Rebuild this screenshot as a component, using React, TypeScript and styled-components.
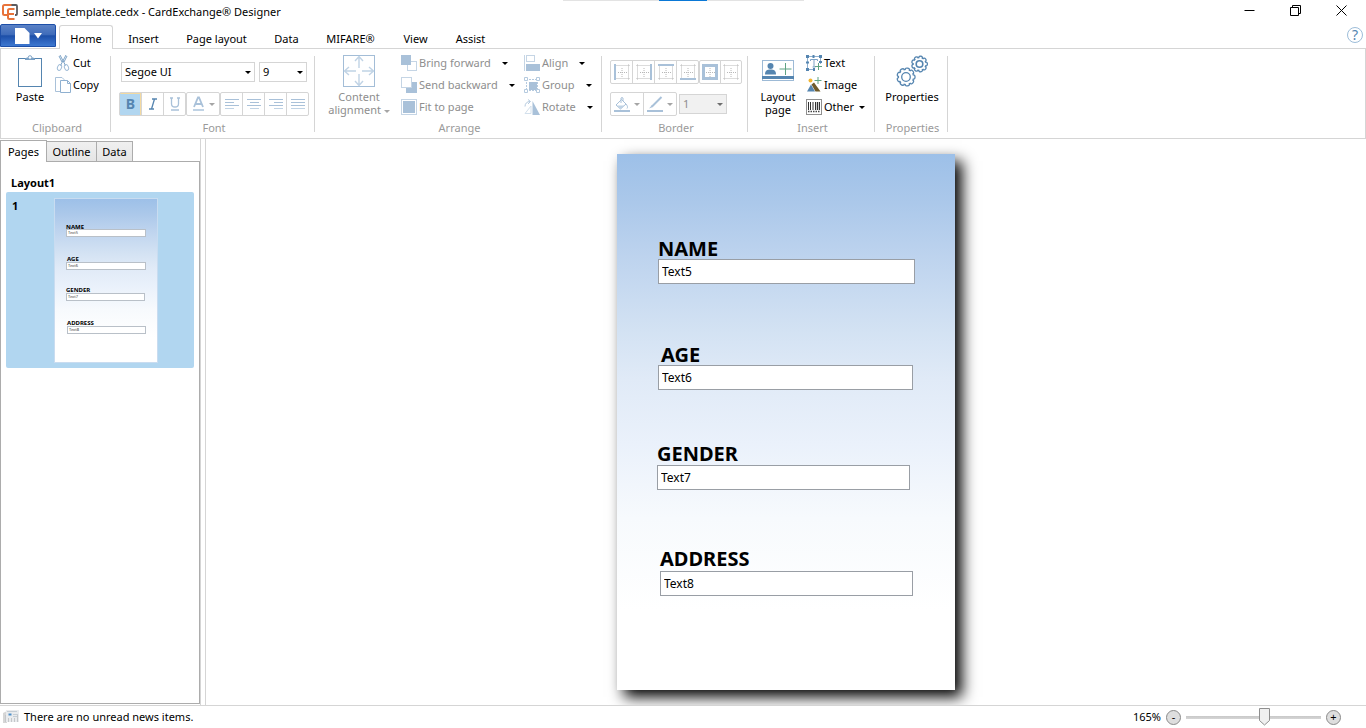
import React, { useState } from "react";
import styled, { createGlobalStyle, css } from "styled-components";

const FONT = `"Segoe UI", "Noto Sans", "Open Sans", sans-serif`;
const BLUE = "#5585b0";
const PALE = "#a9c1d9";
const LINE = "#d5d5d5";
const GREEN = "#5fa383";

const Global = createGlobalStyle`
  *, *::before, *::after { box-sizing: border-box; }
  body { margin: 0; background: #fff; }
  button, input, select { font: inherit; color: inherit; }
`;

/* ---------- frame ---------- */

const Window = styled.div`
  display: flex;
  flex-direction: column;
  height: 100vh;
  overflow: hidden;
  background: #fff;
  color: #000;
  font: 11px/16px ${FONT};
`;

const TitleBar = styled.header`
  position: relative;
  display: flex;
  align-items: center;
  height: 24px;
  padding: 0 2px;
  flex: none;
`;

const Title = styled.h1`
  flex: 1;
  margin: 0 0 0 5px;
  font-size: 11px;
  font-weight: 400;
  white-space: nowrap;
`;

const SnapHint = styled.div`
  position: absolute;
  top: 0;
  left: 50%;
  width: 241px;
  height: 1px;
  margin-left: -120px;
  background: linear-gradient(90deg, #e3e3e3 96px, #0a78d6 96px, #0a78d6 144px, #e3e3e3 144px);
`;

const PlainButton = styled.button`
  display: flex;
  align-items: center;
  justify-content: center;
  padding: 0;
  border: 0;
  background: transparent;
`;

const WindowButton = styled(PlainButton)`
  width: 46px;
  height: 20px;
  margin-bottom: 4px;
`;

/* ---------- ribbon tabs ---------- */

const TabRow = styled.nav`
  display: flex;
  align-items: stretch;
  height: 25px;
  flex: none;
  border-bottom: 1px solid ${LINE};
`;

const FileButton = styled(PlainButton)`
  width: 56px;
  height: 23px;
  gap: 4px;
  border: 1px solid #1d4fa8;
  border-radius: 2px 2px 0 0;
  background: linear-gradient(#5b82c6, #3f6cba 45%, #1c4fa8 52%, #2d63bd 75%, #3d78d0);
`;

const RibbonTab = styled.button<{ $w: number; $active?: boolean }>`
  width: ${(p) => p.$w}px;
  padding: 4px 0 0;
  border: 1px solid transparent;
  border-bottom: 0;
  background: transparent;
  text-align: center;
  white-space: nowrap;
  ${(p) =>
    p.$active &&
    css`
      margin: 1px 2px -1px 3px;
      padding-top: 2px;
      border-color: ${LINE};
      border-radius: 3px 3px 0 0;
      background: #fff;
    `}
`;

const Spacer = styled.div`
  flex: 1;
`;

const HelpButton = styled(PlainButton)`
  width: 16px;
  height: 16px;
  margin: 3px 3px 0 0;
  border: 1px solid #9dbdd9;
  border-radius: 50%;
  color: ${BLUE};
  font-size: 14px;
  line-height: 14px;
`;

/* ---------- ribbon ---------- */

const RibbonBar = styled.div`
  display: flex;
  flex: none;
  height: 90px;
  padding-top: 3px;
  border: 1px solid ${LINE};
  border-top: 0;
`;

const Group = styled.section<{ $w: number }>`
  display: flex;
  flex-direction: column;
  width: ${(p) => p.$w}px;
  flex: none;
`;

const GroupBody = styled.div<{ $pad?: string }>`
  display: flex;
  height: 68px;
  padding: ${(p) => p.$pad || "0"};
`;

const GroupLabel = styled.h2`
  margin: 0;
  padding-left: 3px;
  color: #9a9a9a;
  font-size: 11px;
  font-weight: 400;
  text-align: center;
`;

const Separator = styled.div`
  width: 1px;
  height: 76px;
  margin-top: 4px;
  flex: none;
  background: ${LINE};
`;

const BigButton = styled.button<{ $w: number }>`
  display: flex;
  flex-direction: column;
  align-items: center;
  gap: 3px;
  width: ${(p) => p.$w}px;
  padding: 3px 0 0;
  border: 0;
  flex: none;
  background: transparent;
  line-height: 13px;
  white-space: nowrap;
  &:disabled {
    color: #8e8e8e;
  }
`;

const Stack = styled.div<{ $w?: number }>`
  display: flex;
  flex-direction: column;
  align-self: flex-start;
  min-width: ${(p) => p.$w ?? 0}px;
`;

const SmallButton = styled.button`
  display: flex;
  align-items: center;
  gap: 2px;
  height: 22px;
  padding: 0;
  border: 0;
  background: transparent;
  white-space: nowrap;
  &:disabled {
    color: #8e8e8e;
  }
`;

const Arrow = styled.span<{ $gap?: number; $color?: string }>`
  display: inline-block;
  margin-left: ${(p) => p.$gap ?? 0}px;
  border: 3px solid transparent;
  border-top-color: ${(p) => p.$color || "#000"};
  border-bottom: 0;
  vertical-align: middle;
`;

const ToolRows = styled.div<{ $gap: number }>`
  display: flex;
  flex-direction: column;
  gap: ${(p) => p.$gap}px;
`;

const ToolRow = styled.div<{ $gap?: number; $indent?: number }>`
  display: flex;
  align-items: center;
  gap: ${(p) => p.$gap ?? 0}px;
  padding-left: ${(p) => p.$indent ?? 0}px;
`;

const ToolSet = styled.div`
  display: flex;
  height: 24px;
`;

/* Neighbouring tools share one border line, so each is a pixel wider than its pitch. */
const Tool = styled.button<{ $pitch?: number; $on?: boolean }>`
  display: flex;
  align-items: center;
  justify-content: center;
  gap: 4px;
  width: ${(p) => (p.$pitch ?? 22) + 1}px;
  margin-left: -1px;
  padding: 0;
  border: 1px solid ${LINE};
  background: transparent;
  color: ${PALE};
  font-size: 14px;
  &:first-child {
    margin-left: 0;
    border-radius: 2px 0 0 2px;
  }
  &:last-child {
    border-radius: 0 2px 2px 0;
  }
  &:only-child {
    border-radius: 2px;
  }
  ${(p) =>
    p.$on &&
    css`
      background: #b1d6f0;
      box-shadow: inset -1px 1px 0 #f3d9a0;
      color: ${BLUE};
      font-weight: 700;
    `}
`;

const Combo = styled.label<{ $w: number; $off?: boolean }>`
  position: relative;
  display: block;
  width: ${(p) => p.$w}px;
  height: 20px;
  select {
    width: 100%;
    height: 100%;
    padding: 0 3px;
    border: 1px solid ${LINE};
    border-radius: 0;
    outline: 0;
    appearance: none;
    background: ${(p) => (p.$off ? "#f1f1f1" : "#fff")};
    color: ${(p) => (p.$off ? "#8e8e8e" : "#000")};
    opacity: 1;
  }
  ${Arrow} {
    position: absolute;
    top: 9px;
    right: 4px;
  }
`;

/* ---------- work area ---------- */

const Work = styled.main`
  display: flex;
  flex: 1;
  min-height: 0;
`;

const Sidebar = styled.aside`
  display: flex;
  flex-direction: column;
  width: 200px;
  padding: 1px 0;
  flex: none;
`;

const SideTabs = styled.div`
  display: flex;
  align-items: flex-end;
  height: 21px;
`;

const SideTab = styled.button<{ $w: number; $active?: boolean }>`
  width: ${(p) => p.$w}px;
  height: 20px;
  padding: 0;
  border: 1px solid #acacac;
  border-bottom: 0;
  background: linear-gradient(#f0f0f0, #e5e5e5);
  & + & {
    margin-left: -1px;
  }
  ${(p) =>
    p.$active &&
    css`
      z-index: 1;
      height: 22px;
      margin-bottom: -1px;
      background: #fff;
    `}
`;

const PagePanel = styled.div`
  flex: 1;
  padding: 13px 5px;
  border: 1px solid #acacac;
`;

const LayoutName = styled.h3`
  margin: 0 0 1px 5px;
  font-size: 11px;
  font-weight: 700;
`;

const PageItem = styled.div`
  display: grid;
  grid-template-columns: 48px 104px;
  padding: 6px 0 5px;
  border-radius: 2px;
  background: #b1d6f0;
`;

const PageNumber = styled.span`
  padding-left: 6px;
  font-weight: 700;
`;

const Splitter = styled.div`
  width: 6px;
  flex: none;
  border: solid ${LINE};
  border-width: 0 1px;
`;

const Canvas = styled.section`
  display: flex;
  flex: 1;
  align-items: flex-start;
  justify-content: center;
  padding-top: 15px;
  overflow: hidden;
`;

const cardFill = css`
  background: linear-gradient(
    #9dc0e8 0%,
    #abc8ea 9%,
    #bdd3ee 19%,
    #d3e2f3 33%,
    #e0eaf7 42%,
    #eaf1fb 54%,
    #f7fafd 68%,
    #fff 85%
  );
`;

const CardSheet = styled.div`
  position: relative;
  width: 338px;
  height: 536px;
  flex: none;
  ${cardFill}
  box-shadow: 7px 7px 14px #000;
`;

const Caption = styled.label<{ $x: number; $y: number }>`
  position: absolute;
  left: ${(p) => p.$x}px;
  top: ${(p) => p.$y}px;
  font-size: 20px;
  font-weight: 700;
  line-height: 24px;
`;

const FieldBox = styled.input<{ $x: number; $y: number; $w: number }>`
  position: absolute;
  left: ${(p) => p.$x}px;
  top: ${(p) => p.$y}px;
  width: ${(p) => p.$w}px;
  height: 25px;
  padding: 0 3px;
  border: 1px solid #999ea5;
  border-radius: 0;
  outline: 0;
  background: #fff;
  font-size: 12px;
`;

const ThumbSheet = styled.div`
  position: relative;
  width: 104px;
  height: 165px;
  border: 1px solid #c9dcf0;
  ${cardFill}
`;

const ThumbCaption = styled.span<{ $x: number; $y: number }>`
  position: absolute;
  left: ${(p) => p.$x}px;
  top: ${(p) => p.$y}px;
  font-size: 6px;
  font-weight: 700;
  line-height: 8px;
`;

const ThumbField = styled.span<{ $x: number; $y: number; $w: number }>`
  position: absolute;
  left: ${(p) => p.$x}px;
  top: ${(p) => p.$y}px;
  width: ${(p) => p.$w}px;
  height: 8px;
  padding-left: 1px;
  border: 1px solid #b9c0c8;
  background: #fff;
  color: #444;
  font-size: 4px;
  line-height: 6px;
`;

/* ---------- status bar ---------- */

const StatusBar = styled.footer`
  display: flex;
  align-items: center;
  gap: 5px;
  flex: none;
  height: 23px;
  padding: 0 25px 0 3px;
  border-top: 1px solid ${LINE};
`;

const ZoomButton = styled(PlainButton)`
  width: 15px;
  height: 15px;
  border: 1px solid #8a8a8a;
  border-radius: 50%;
  background: #dedede;
`;

const SliderBox = styled.div`
  position: relative;
  width: 135px;
  height: 18px;
  input {
    width: 100%;
    height: 18px;
    margin: 0;
    appearance: none;
    background: linear-gradient(#c8c8c8, #d6d6d6) 0 8px / 100% 3px no-repeat;
  }
  input::-webkit-slider-thumb {
    appearance: none;
    width: 11px;
    height: 18px;
    background: transparent;
  }
  svg {
    position: absolute;
    top: 0;
    pointer-events: none;
  }
`;

/* ---------- icons ---------- */

const Svg = ({ w, h, children }: { w: number; h: number; children: React.ReactNode }) => (
  <svg width={w} height={h} viewBox={`0 0 ${w} ${h}`} fill="none" aria-hidden="true">
    {children}
  </svg>
);

const LogoIcon = () => (
  <Svg w={16} h={16}>
    <path d="M7 1h7a1 1 0 0 1 1 1v8a1 1 0 0 1-1 1h-1" stroke="#5b5b5f" strokeWidth="1.800" />
    <path d="M9.500 1H2.500A1.500 1.500 0 0 0 1 2.500v7A1.500 1.500 0 0 0 2.500 11H5" stroke="#e8733a" strokeWidth="2" />
    <path d="M12.500 5H7.500A1.500 1.500 0 0 0 6 6.500v7A1.500 1.500 0 0 0 7.500 15h5M6 10h6" stroke="#e8733a" strokeWidth="2" />
  </Svg>
);

const DocIcon = () => (
  <Svg w={15} h={16}>
    <path d="M0 0h9.500L14.500 5v11H0z" fill="#fff" />
  </Svg>
);

const PasteIcon = () => (
  <Svg w={24} h={32}>
    <rect x=".5" y="3.500" width="23" height="28" stroke={BLUE} />
    <path d="M7 5V3.500L9 2.500h6l2 1V5z" fill="#7ca2c6" />
    <circle cx="12" cy="2.500" r="1.800" fill="#fff" stroke="#7ca2c6" />
  </Svg>
);

const CutIcon = () => (
  <Svg w={16} h={16}>
    <path d="M5 0l5.500 10.500M11 0L5.500 10.500M4 1l3 6M12 1L9 7" stroke="#7ca2c6" />
    <ellipse cx="4.500" cy="12.500" rx="2" ry="3" stroke="#9dbad6" transform="rotate(20 4.500 12.500)" />
    <ellipse cx="11.500" cy="12.500" rx="2" ry="3" stroke="#9dbad6" transform="rotate(-20 11.500 12.500)" />
  </Svg>
);

const CopyIcon = () => (
  <Svg w={16} h={16}>
    <path d="M5 14.500H.5V.5H7L9 2.500V4" stroke={PALE} />
    <path d="M5.500 3.500h7l3 3v9h-10zM12.500 3.500v3h3" stroke="#8fb0d0" />
  </Svg>
);

const ContentAlignIcon = () => (
  <Svg w={32} h={32}>
    <rect x=".5" y=".5" width="31" height="31" stroke="#a3bdd7" />
    <path
      d="M16 2v11M16 30V19M2 16h11M30 16H19M12 6l4-4.500L20 6M12 26l4 4.500 4-4.500M6 12l-4.500 4L6 20M26 12l4.500 4-4.500 4"
      stroke="#c0d3e5"
      strokeWidth="1.400"
    />
  </Svg>
);

const ForwardIcon = () => (
  <Svg w={16} h={16}>
    <rect x="6.500" y="6.500" width="9" height="9" stroke="#c5d5e5" />
    <rect width="10" height="10" fill={PALE} />
  </Svg>
);

const BackwardIcon = () => (
  <Svg w={16} h={16}>
    <rect x="5" y="5" width="11" height="11" fill={PALE} />
    <rect x=".5" y=".5" width="10" height="10" fill="#fff" stroke="#c5d5e5" />
  </Svg>
);

const FitIcon = () => (
  <Svg w={16} h={16}>
    <rect x=".5" y=".5" width="15" height="15" stroke="#c5d5e5" />
    <rect x="2" y="2" width="12" height="12" fill={PALE} />
  </Svg>
);

const AlignIcon = () => (
  <Svg w={16} h={16}>
    <path d="M.5 0v16" stroke="#c5d5e5" />
    <rect x="2.500" y=".5" width="8" height="6" stroke="#c5d5e5" />
    <rect x="2" y="9" width="14" height="7" fill={PALE} />
  </Svg>
);

const GroupIcon = () => (
  <Svg w={16} h={16}>
    <rect x="5" y="5" width="8" height="8" fill={PALE} />
    <path d="M5 2.500h7M5 13.500h7M2.500 5v7M13.500 5v7" stroke="#b5cadf" strokeDasharray="2 1" />
    <path d="M.5.5h3v3h-3zM12.500.5h3v3h-3zM.5 12.500h3v3h-3zM12.500 12.500h3v3h-3z" fill="#fff" stroke="#b5cadf" />
  </Svg>
);

const RotateIcon = () => (
  <Svg w={16} h={16}>
    <path d="M8.500 2v14H16z" fill={PALE} />
    <path d="M7 7L1 14.500h6z" stroke="#d3e0ec" />
    <path d="M1 7.500C1 4.500 3 2.500 6 2.500M4 .5l2.500 2L4 5" stroke="#b5cadf" />
  </Svg>
);

const AlignLines = ({ kind }: { kind: "left" | "center" | "right" | "full" }) => {
  const short = { left: [0, 9], center: [3, 12], right: [5, 14], full: [0, 14] }[kind];
  return (
    <Svg w={14} h={12}>
      {[0, 1, 2, 3].map((i) => {
        const [a, b] = i % 2 ? short : [0, 14];
        return <path key={i} d={`M${a} ${i * 3 + 1.5}H${b}`} stroke={i === 3 ? "#c0d3e5" : PALE} />;
      })}
    </Svg>
  );
};

const FontColorIcon = () => (
  <Svg w={13} h={16}>
    <path d="M2 11L6 1.500h1L11 11M3.500 8h6" stroke={PALE} strokeWidth="1.800" />
    <rect x="1" y="13" width="11" height="2" fill="#c0d3e5" />
  </Svg>
);

type Side = "left" | "right" | "top" | "bottom" | "all" | "none";

const BorderIcon = ({ side }: { side: Side }) => (
  <Svg w={16} h={16}>
    <path
      d="M1.500.5v15M14.500.5v15M.5 1.500h15M.5 14.500h15M8 4v9M4 8.500h9"
      stroke="#b8b8b8"
      strokeDasharray="1 1"
    />
    {side === "left" && <path d="M1 0v16" stroke={PALE} strokeWidth="2" />}
    {side === "right" && <path d="M15 0v16" stroke={PALE} strokeWidth="2" />}
    {side === "top" && <path d="M0 1h16" stroke={PALE} strokeWidth="2" />}
    {side === "bottom" && <path d="M0 15h16" stroke={PALE} strokeWidth="2" />}
    {side === "all" && <rect x="1.500" y="1.500" width="13" height="13" stroke={PALE} strokeWidth="3" />}
  </Svg>
);

const BucketIcon = () => (
  <Svg w={16} h={16}>
    <path d="M7.500 3.500L2 9l4.500 4L12 8zM7 7V2a1.500 1.500 0 0 1 2 0v3" stroke={PALE} />
    <path d="M3 9.500h8L6.500 13z" fill="#c0d3e5" />
    <path d="M12 8c1.500 2 2 3 1 4.500" stroke={PALE} />
    <path d="M0 15h16" stroke={PALE} strokeWidth="2" />
  </Svg>
);

const PenIcon = () => (
  <Svg w={16} h={16}>
    <path d="M14.500 1L5 10.500" stroke={PALE} strokeWidth="2" />
    <path d="M5 9l-3 3.500L6 11z" fill={PALE} />
    <path d="M0 15h16" stroke={PALE} strokeWidth="2" />
  </Svg>
);

const LayoutPageIcon = () => (
  <Svg w={32} h={32}>
    <rect x=".5" y="5.500" width="31" height="20" stroke="#9dbad6" />
    <rect x="0" y="21" width="32" height="3" fill={BLUE} />
    <circle cx="8.500" cy="11" r="3" fill={BLUE} />
    <path d="M3 19.500c0-4 2-5 5.500-5s5.500 1 5.500 5z" fill={BLUE} />
    <path d="M23.500 8v12M17.500 14h12" stroke={GREEN} />
  </Svg>
);

const TextIcon = () => (
  <Svg w={16} h={16}>
    <path d="M3 1.500h10M3 14.500h5M1.500 3v10M14.500 3v6" stroke="#8fb0d0" />
    <path d="M0 0h3v3H0zM6.500 0h2v3h-2zM13 0h3v3h-3zM0 6.500h3v2H0zM0 13h3v3H0zM13 6h3v2h-3zM7 13h2v3H7z" fill={BLUE} />
    <path d="M4.500 6V4.500h7V6M8 5v7M6.500 12h3" stroke="#7ca2c6" />
    <path d="M12.500 8v7M9 11.500h7" stroke={GREEN} />
  </Svg>
);

const ImageIcon = () => (
  <Svg w={16} h={16}>
    <circle cx="4.500" cy="3.500" r="2" fill="#f2b632" />
    <path d="M1 14.500L5 7.500l4 7z" fill={BLUE} />
    <path d="M5.500 7.500L8 5.500l6.500 9H9.500z" fill="#6f5a2a" />
    <path d="M12 0v7M8.500 3.500h7" stroke={GREEN} />
  </Svg>
);

const BarcodeIcon = () => (
  <Svg w={16} h={16}>
    <rect x=".5" y=".5" width="15" height="15" stroke="#8f8f8f" />
    <path d="M2.500 3v8M4.500 3v8M7 3v8M9.500 3v8M13.500 3v8" stroke="#333" />
    <path d="M11.500 3v8" stroke="#333" strokeWidth="1.500" />
    <path d="M2 12.500h12" stroke="#444" strokeWidth="1.500" strokeDasharray="1.500 1" />
  </Svg>
);

/* Scalloped outline: each tooth is a round lobe between two points of the pitch circle. */
const gearPath = (cx: number, cy: number, r: number, teeth: number) => {
  const at = (a: number, d: number) => `${(cx + d * Math.cos(a)).toFixed(2)} ${(cy + d * Math.sin(a)).toFixed(2)}`;
  let d = "";
  for (let i = 0; i < teeth; i++) {
    const a = (i * 2 * Math.PI) / teeth;
    const s = Math.PI / teeth;
    d += `${i ? "L" : "M"}${at(a - s * 0.8, r)}C${at(a - s * 0.8, r + 2.4)} ${at(a + s * 0.8, r + 2.4)} ${at(a + s * 0.8, r)}`;
  }
  return d + "Z";
};

const GearsIcon = () => (
  <Svg w={32} h={32}>
    <path d={gearPath(10, 22, 7.6, 9)} stroke={BLUE} strokeWidth="1.300" />
    <circle cx="10" cy="22" r="4.300" stroke={BLUE} strokeWidth="1.300" />
    <path d={gearPath(23.5, 9, 6.4, 9)} stroke={BLUE} strokeWidth="1.300" />
    <circle cx="23.500" cy="9" r="3.300" stroke={BLUE} strokeWidth="1.600" />
  </Svg>
);

const NewsIcon = () => (
  <Svg w={16} h={14}>
    <path d="M0 3l4-2v12H0z" fill="#d6d6d6" />
    <rect x="3" y="0" width="13" height="12" fill="#e9ebed" />
    <path d="M4 1.500h10M10 4.500h5M10 6.500h5" stroke="#c5cdd4" />
    <rect x="5.500" y="3.500" width="3" height="2" fill="#4e8fc9" />
    <path d="M2.500 5v7M5.500 8v4M8.500 8v4M11.500 8v4M14.500 5v7" stroke="#c4c7ca" />
  </Svg>
);

/* ---------- data ---------- */

const ribbonTabs = [
  { name: "Insert", w: 57 },
  { name: "Page layout", w: 89 },
  { name: "Data", w: 51 },
  { name: "MIFARE®", w: 77 },
  { name: "View", w: 53 },
  { name: "Assist", w: 57 },
];

const fields = [
  { caption: "NAME", text: "Text5", cap: [41, 83], box: [41, 105, 257], tcap: [11, 24], tbox: [11, 30, 80] },
  { caption: "AGE", text: "Text6", cap: [44, 189], box: [41, 211, 255], tcap: [12, 56], tbox: [11, 63, 80] },
  { caption: "GENDER", text: "Text7", cap: [40, 288], box: [40, 311, 253], tcap: [11, 87], tbox: [11, 94, 79] },
  { caption: "ADDRESS", text: "Text8", cap: [43, 393], box: [43, 417, 253], tcap: [12, 120], tbox: [12, 127, 79] },
];

export default function App() {
  const [zoom, setZoom] = useState(165);
  const [min, max] = [0, 280];

  return (
    <Window>
      <Global />
      <TitleBar>
        <LogoIcon />
        <Title>sample_template.cedx - CardExchange® Designer</Title>
        <SnapHint />
        <WindowButton aria-label="Minimize">
          <Svg w={11} h={11}>
            <path d="M.5 5.500h10" stroke="#000" />
          </Svg>
        </WindowButton>
        <WindowButton aria-label="Restore">
          <Svg w={11} h={11}>
            <path d="M.5 2.500h8v8h-8zM2.500 2.500v-2h8v8h-2" stroke="#000" />
          </Svg>
        </WindowButton>
        <WindowButton aria-label="Close">
          <Svg w={11} h={11}>
            <path d="M.5.5l10 10M10.500.5l-10 10" stroke="#000" />
          </Svg>
        </WindowButton>
      </TitleBar>

      <TabRow>
        <FileButton aria-label="File">
          <DocIcon />
          <Svg w={8} h={6}>
            <path d="M0 0h8L4 5.500z" fill="#fff" />
          </Svg>
        </FileButton>
        <RibbonTab $w={54} $active>
          Home
        </RibbonTab>
        {ribbonTabs.map((t) => (
          <RibbonTab key={t.name} $w={t.w}>
            {t.name}
          </RibbonTab>
        ))}
        <Spacer />
        <HelpButton aria-label="Help">?</HelpButton>
      </TabRow>

      <RibbonBar>
        <Group $w={109}>
          <GroupBody $pad="0 0 0 4px">
            <BigButton $w={50}>
              <PasteIcon />
              Paste
            </BigButton>
            <Stack>
              <SmallButton>
                <CutIcon />
                Cut
              </SmallButton>
              <SmallButton>
                <CopyIcon />
                Copy
              </SmallButton>
            </Stack>
          </GroupBody>
          <GroupLabel>Clipboard</GroupLabel>
        </Group>
        <Separator />

        <Group $w={203}>
          <GroupBody $pad="10px 0 0 8px">
            <ToolRows $gap={10}>
              <ToolRow $gap={4} $indent={2}>
                <Combo $w={134}>
                  <select aria-label="Font">
                    <option>Segoe UI</option>
                  </select>
                  <Arrow />
                </Combo>
                <Combo $w={48}>
                  <select aria-label="Font size">
                    <option>9</option>
                  </select>
                  <Arrow />
                </Combo>
              </ToolRow>
              <ToolRow>
                <ToolSet>
                  <Tool $on aria-label="Bold">
                    B
                  </Tool>
                  <Tool aria-label="Italic">
                    <Svg w={8} h={12}>
                      <path d="M3 1h5M0 11h5M5.500 1l-3 10" stroke={BLUE} strokeWidth="1.300" />
                    </Svg>
                  </Tool>
                  <Tool aria-label="Underline">
                    <Svg w={10} h={14}>
                      <path d="M1.500 1v6c0 4 7 4 7 0V1M0 1h3M7 1h3M1 13h8" stroke={PALE} strokeWidth="1.300" />
                    </Svg>
                  </Tool>
                </ToolSet>
                <ToolSet>
                  <Tool $pitch={33} aria-label="Font colour">
                    <FontColorIcon />
                    <Arrow $color="#a5a5a5" />
                  </Tool>
                </ToolSet>
                <ToolSet>
                  <Tool aria-label="Align left">
                    <AlignLines kind="left" />
                  </Tool>
                  <Tool aria-label="Align centre">
                    <AlignLines kind="center" />
                  </Tool>
                  <Tool aria-label="Align right">
                    <AlignLines kind="right" />
                  </Tool>
                  <Tool aria-label="Justify">
                    <AlignLines kind="full" />
                  </Tool>
                </ToolSet>
              </ToolRow>
            </ToolRows>
          </GroupBody>
          <GroupLabel>Font</GroupLabel>
        </Group>
        <Separator />

        <Group $w={286}>
          <GroupBody $pad="0 0 0 8px">
            <BigButton $w={72} disabled>
              <ContentAlignIcon />
              <span>
                Content
                <br />
                alignment <Arrow $color="#a5a5a5" />
              </span>
            </BigButton>
            <ToolRow $indent={6}>
              <Stack $w={123}>
                <SmallButton disabled>
                  <ForwardIcon />
                  Bring forward
                  <Arrow $gap={9} />
                </SmallButton>
                <SmallButton disabled>
                  <BackwardIcon />
                  Send backward
                  <Arrow $gap={9} />
                </SmallButton>
                <SmallButton disabled>
                  <FitIcon />
                  Fit to page
                </SmallButton>
              </Stack>
              <Stack>
                <SmallButton disabled>
                  <AlignIcon />
                  Align
                  <Arrow $gap={9} />
                </SmallButton>
                <SmallButton disabled>
                  <GroupIcon />
                  Group
                  <Arrow $gap={9} />
                </SmallButton>
                <SmallButton disabled>
                  <RotateIcon />
                  Rotate
                  <Arrow $gap={9} />
                </SmallButton>
              </Stack>
            </ToolRow>
          </GroupBody>
          <GroupLabel>Arrange</GroupLabel>
        </Group>
        <Separator />

        <Group $w={145}>
          <GroupBody $pad="8px 0 0 8px">
            <ToolRows $gap={8}>
              <ToolRow>
                <ToolSet>
                  <Tool aria-label="Left border">
                    <BorderIcon side="left" />
                  </Tool>
                  <Tool aria-label="Right border">
                    <BorderIcon side="right" />
                  </Tool>
                  <Tool aria-label="Top border">
                    <BorderIcon side="top" />
                  </Tool>
                  <Tool aria-label="Bottom border">
                    <BorderIcon side="bottom" />
                  </Tool>
                </ToolSet>
                <ToolSet>
                  <Tool $pitch={21} aria-label="All borders">
                    <BorderIcon side="all" />
                  </Tool>
                  <Tool $pitch={21} aria-label="No border">
                    <BorderIcon side="none" />
                  </Tool>
                </ToolSet>
              </ToolRow>
              <ToolRow $gap={2}>
                <ToolSet>
                  <Tool $pitch={33} aria-label="Fill colour">
                    <BucketIcon />
                    <Arrow $color="#a5a5a5" />
                  </Tool>
                  <Tool $pitch={33} aria-label="Line colour">
                    <PenIcon />
                    <Arrow $color="#a5a5a5" />
                  </Tool>
                </ToolSet>
                <Combo $w={48} $off>
                  <select aria-label="Line width" disabled>
                    <option>1</option>
                  </select>
                  <Arrow $color="#6e6e6e" />
                </Combo>
              </ToolRow>
            </ToolRows>
          </GroupBody>
          <GroupLabel>Border</GroupLabel>
        </Group>
        <Separator />

        <Group $w={126}>
          <GroupBody $pad="0 0 0 8px">
            <BigButton $w={44}>
              <LayoutPageIcon />
              <span>
                Layout
                <br />
                page
              </span>
            </BigButton>
            <ToolRow $indent={6}>
              <Stack>
                <SmallButton>
                  <TextIcon />
                  Text
                </SmallButton>
                <SmallButton>
                  <ImageIcon />
                  Image
                </SmallButton>
                <SmallButton>
                  <BarcodeIcon />
                  Other
                  <Arrow $gap={3} />
                </SmallButton>
              </Stack>
            </ToolRow>
          </GroupBody>
          <GroupLabel>Insert</GroupLabel>
        </Group>
        <Separator />

        <Group $w={72}>
          <GroupBody>
            <BigButton $w={74}>
              <GearsIcon />
              Properties
            </BigButton>
          </GroupBody>
          <GroupLabel>Properties</GroupLabel>
        </Group>
        <Separator />
      </RibbonBar>

      <Work>
        <Sidebar>
          <SideTabs>
            <SideTab $w={47} $active>
              Pages
            </SideTab>
            <SideTab $w={51}>Outline</SideTab>
            <SideTab $w={37}>Data</SideTab>
          </SideTabs>
          <PagePanel>
            <LayoutName>Layout1</LayoutName>
            <PageItem>
              <PageNumber>1</PageNumber>
              <ThumbSheet>
                {fields.map((f) => (
                  <React.Fragment key={f.caption}>
                    <ThumbCaption $x={f.tcap[0]} $y={f.tcap[1]}>
                      {f.caption}
                    </ThumbCaption>
                    <ThumbField $x={f.tbox[0]} $y={f.tbox[1]} $w={f.tbox[2]}>
                      {f.text}
                    </ThumbField>
                  </React.Fragment>
                ))}
              </ThumbSheet>
            </PageItem>
          </PagePanel>
        </Sidebar>
        <Splitter />
        <Canvas>
          <CardSheet>
            {fields.map((f) => (
              <React.Fragment key={f.caption}>
                <Caption htmlFor={f.text} $x={f.cap[0]} $y={f.cap[1]}>
                  {f.caption}
                </Caption>
                <FieldBox id={f.text} defaultValue={f.text} $x={f.box[0]} $y={f.box[1]} $w={f.box[2]} />
              </React.Fragment>
            ))}
          </CardSheet>
        </Canvas>
      </Work>

      <StatusBar>
        <NewsIcon />
        <span>There are no unread news items.</span>
        <Spacer />
        <span>{zoom}%</span>
        <ZoomButton aria-label="Zoom out" onClick={() => setZoom(Math.max(min, zoom - 5))}>
          -
        </ZoomButton>
        <SliderBox>
          <input
            type="range"
            aria-label="Zoom"
            min={min}
            max={max}
            value={zoom}
            onChange={(e) => setZoom(Number(e.target.value))}
          />
          <svg width="11" height="18" viewBox="0 0 11 18" style={{ left: Math.round(((zoom - min) / (max - min)) * 124) }} aria-hidden="true">
            <path d="M.5.500h10v12L5.500 17 .5 12.500z" fill="#f0f0f0" stroke="#8f8f8f" />
          </svg>
        </SliderBox>
        <ZoomButton aria-label="Zoom in" onClick={() => setZoom(Math.min(max, zoom + 5))}>
          +
        </ZoomButton>
      </StatusBar>
    </Window>
  );
}
